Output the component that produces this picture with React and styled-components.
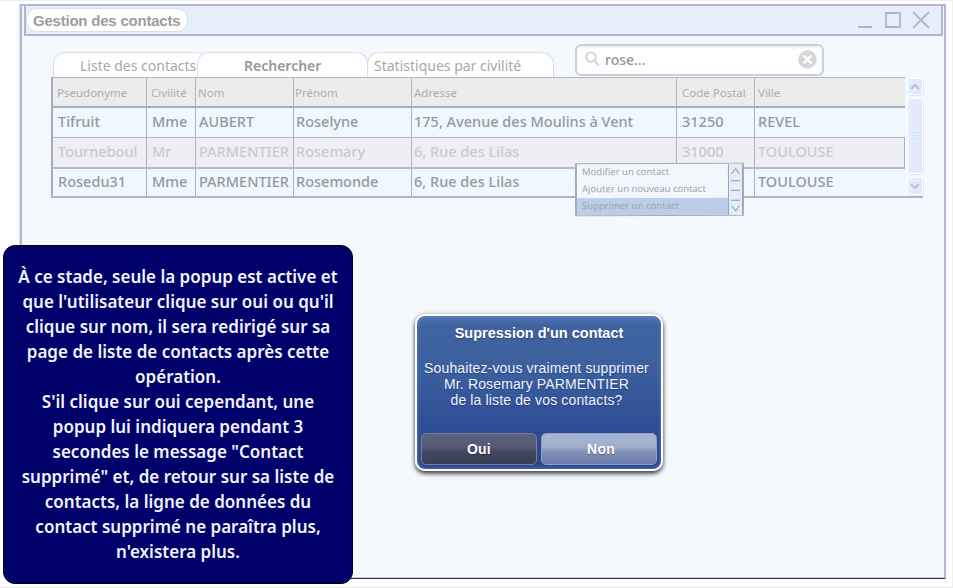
import React from "react";
import styled, { createGlobalStyle } from "styled-components";

const Global = createGlobalStyle`
  * { box-sizing: border-box; }
  body { margin: 0; background: #fff; overflow: hidden; }
`;

const Page = styled.div`
  position: relative;
  width: 953px;
  height: 588px;
  padding: 4px 7px 9px 18px;
  background: #fff;
  border-right: 1px solid #f1f1f1;
  border-bottom: 1px solid #e9e9e9;
  box-shadow: inset 0 1px #eeeef0;
  overflow: hidden;
  font-family: "Noto Sans", sans-serif;
`;

const Window = styled.main`
  width: 926px;
  height: 575px;
  margin-left: 2px;
  padding: 0 1px 0 3px;
  background: #f5f9fe;
  border: 2px solid #b1b5d4;
  border-bottom: 1px solid #283253;
  box-shadow: -1px 0 #dfe1ea, inset 0 -1px #c9cedd;
`;

const TitleBar = styled.header`
  display: flex;
  align-items: center;
  justify-content: space-between;
  height: 30px;
  width: 919px;
  margin-left: -1px;
  padding: 0 10px 0 0;
  background: #e6eff9;
  border: 2px solid #b1b5d4;
  border-top: 0;
`;

const Title = styled.h1`
  margin: 0;
  width: 162px;
  height: 24px;
  padding-left: 6px;
  border: 1px solid #d9dfea;
  border-radius: 11px;
  background: #fff;
  color: #9d9d9d;
  font: bold 15px/23px "Liberation Sans", Arial, sans-serif;
  letter-spacing: -0.22px;
  white-space: nowrap;
`;

const Controls = styled.svg`
  display: block;
  width: 73px;
  height: 18px;
  margin-bottom: 1px;
  fill: none;
  stroke: #b0b4d3;
  stroke-width: 1.8;
`;

const Toolbar = styled.div`
  display: flex;
  height: 41px;
  padding-left: 28px;
  align-items: flex-end;
`;

const Tab = styled.button`
  flex: none;
  width: ${(p) => p.$w}px;
  height: 25px;
  margin: 0 ${(p) => p.$overlap || 0}px 0 0;
  padding: 1px 0 0 ${(p) => p.$pad}px;
  text-align: left;
  border: 1px solid #d8dce4;
  border-bottom: 0;
  border-radius: 12px 12px 0 0;
  background: #fff;
  color: ${(p) => (p.$active ? "#979797" : "#a8a8a8")};
  font: ${(p) => (p.$active ? 600 : 400)} 14px/22px "Noto Sans", sans-serif;
  white-space: nowrap;
`;

const Search = styled.label`
  display: flex;
  align-items: center;
  width: 249px;
  height: 32px;
  margin: 0 0 1px 21px;
  padding: 0 5px 0 8px;
  background: #fff;
  border: 2px solid #cbd0dc;
  border-radius: 6px;
  box-shadow: inset 0 2px 2px #f0f0f3;
  color: #979797;
  font: 500 14px/20px "Noto Sans", sans-serif;
  svg { flex: none; margin-bottom: 2px; }
  span { flex: 1; padding: 0 0 0 5px; }
`;

const TableArea = styled.section`
  display: flex;
  margin-left: 26px;
  width: 872px;
  height: 121px;
  border-bottom: 2px solid #b0b4c3;
`;

const Grid = styled.div`
  width: 854px;
  flex: none;
  border-left: 2px solid #a9adbb;
  border-top: 1px solid #b3b6bd;
`;

const Row = styled.div`
  display: grid;
  grid-template-columns: 94px 49px 98px 118px 265px 78px 150px;
  height: ${(p) => p.$h}px;
  background: ${(p) => (p.$kind === "head" ? "#ececec" : p.$kind === "off" ? "#edeff2" : "#eff8fe")};
  color: ${(p) => (p.$kind === "head" ? "#acacac" : p.$kind === "off" ? "#cacbcd" : "#96999b")};
  font-size: ${(p) => (p.$kind === "head" ? 11.5 : 14.5)}px;
  font-weight: ${(p) => (p.$kind === "head" ? 400 : 500)};
  line-height: ${(p) => p.$lh}px;
  border-bottom: ${(p) => (p.$last ? 0 : p.$kind === "on" ? 1 : 2)}px solid
    ${(p) => (p.$kind === "head" ? "#acb0b5" : "#b1bac9")};
`;

const Cell = styled.div`
  padding-left: ${(p) => p.$pad}px;
  border-right: 1px solid #adb2bc;
  white-space: nowrap;
  &:last-child { border-right-color: ${(p) => (p.$edge ? "#adb2bc" : "transparent")}; }
`;

const Scroll = styled.div`
  display: flex;
  flex-direction: column;
  gap: 3px;
  width: 18px;
  padding: 1px 0 1px 2px;
`;

const ScrollPart = styled.div`
  display: flex;
  align-items: center;
  justify-content: center;
  height: ${(p) => p.$h}px;
  background: linear-gradient(90deg, #e6edfd, #e0e8fb);
  border: 1px solid #fff;
  border-radius: 2px;
  box-shadow: 1px 1px #e3e8f4;
`;

const Menu = styled.div`
  position: absolute;
  left: 575px;
  top: 163px;
  display: flex;
  width: 169px;
  height: 53px;
  border: 1px solid #a8abb3;
  border-left: 2px solid #a8abb3;
  background: #f2f7fd;
  transform: rotate(-0.15deg);
`;

const MenuList = styled.div`
  flex: 1;
`;

const MenuItem = styled.div`
  height: 17px;
  padding-left: 5px;
  font: 9.5px/16px "Noto Sans", sans-serif;
  color: #a2a4a8;
  background: ${(p) => (p.$on ? "#bbcde7" : "transparent")};
`;

const MenuScroll = styled.svg`
  width: 15px;
  height: 51px;
  border-left: 1px solid #9ba3b2;
  border-right: 1px solid #9ba3b2;
  background: #e3ecf8;
  fill: none;
  stroke: #9098a8;
`;

const Dialog = styled.div`
  position: absolute;
  left: 415px;
  top: 314px;
  display: flex;
  flex-direction: column;
  width: 248px;
  height: 157px;
  padding: 0 4px 4px 4px;
  border: 2px solid #fdfdfe;
  border-radius: 10px;
  background: linear-gradient(#5079b8 0, #40639e 9px, #3c609f 35%, #2d4a94 75%, #2b458d);
  box-shadow: 0 3px 4px rgba(0, 0, 0, 0.65), 0 0 4px rgba(0, 0, 0, 0.28), inset 0 0 4px #5c83c2;
  color: #fff;
  text-align: center;
  font-family: "Liberation Sans", Arial, sans-serif;
  text-shadow: 0 1px 1px rgba(20, 40, 90, 0.45);
`;

const DialogTitle = styled.h2`
  margin: 8px 0 18px;
  font-size: 14.5px;
  line-height: 18px;
`;

const DialogText = styled.p`
  margin: 0 5px 0 0;
  font-size: 14px;
  line-height: 16px;
  color: #f0f4fc;
  letter-spacing: 0.14px;
  white-space: pre;
`;

const Actions = styled.div`
  display: flex;
  justify-content: space-between;
  margin-top: auto;
`;

const Action = styled.button`
  width: 116px;
  height: 32px;
  padding: 0 0 0 ${(p) => (p.$light ? 4 : 0)}px;
  border: 1px solid ${(p) => (p.$light ? "#8d9dc4" : "#777f9b")};
  border-radius: 5px;
  background: ${(p) =>
    p.$light
      ? "linear-gradient(#a7b5d2, #a1afcd 42%, #8292b8 60%, #6b7ba9)"
      : "linear-gradient(#5b617b, #555b74 42%, #424760 60%, #393f54)"};
  color: #fff;
  font: bold 14px/28px "Liberation Sans", Arial, sans-serif;
  letter-spacing: 0.2px;
  text-shadow: 0 1px 1px rgba(0, 0, 0, 0.4);
`;

const Note = styled.aside`
  position: absolute;
  left: 3px;
  top: 245px;
  width: 350px;
  height: 339px;
  padding-top: 18px;
  border: 1px solid #000016;
  border-radius: 12px;
  background: #00006a;
  color: #f1f3ff;
  text-align: center;
  font: 600 17px/25px "Noto Sans", sans-serif;
`;

const NoteLine = styled.div`
  white-space: nowrap;
`;

const pads = [5, 5, 3, 2, 2, 5, 3];
const rows = [
  { kind: "head", h: 30, lh: 29, cells: ["Pseudonyme", "Civilité", "Nom", "Prénom", "Adresse", "Code Postal", "Ville"] },
  { kind: "on", h: 30, lh: 27, cells: ["Tifruit", "Mme", "AUBERT", "Roselyne", "175, Avenue des Moulins à Vent", "31250", "REVEL"] },
  { kind: "off", h: 31, lh: 27, cells: ["Tourneboul", "Mr", "PARMENTIER", "Rosemary", "6, Rue des Lilas", "31000", "TOULOUSE"] },
  { kind: "on", h: 27, lh: 25, cells: ["Rosedu31", "Mme", "PARMENTIER", "Rosemonde", "6, Rue des Lilas", "", "TOULOUSE"] },
];

const noteLines = [
  "À ce stade, seule la popup est active et",
  "que l'utilisateur clique sur oui ou qu'il",
  "clique sur nom, il sera redirigé sur sa",
  "page de liste de contacts après cette",
  "opération.",
  "S'il clique sur oui cependant, une",
  "popup lui indiquera pendant 3",
  'secondes le message "Contact',
  'supprimé" et, de retour sur sa liste de',
  "contacts, la ligne de données du",
  "contact supprimé ne paraîtra plus,",
  "n'existera plus.",
];

function Chevron({ up }) {
  return (
    <svg width="10" height="8" fill="none" stroke="#b9c0d8" strokeWidth="2">
      <path d={up ? "M1 6l4-4 4 4" : "M1 2l4 4 4-4"} />
    </svg>
  );
}

export default function App() {
  return (
    <Page>
      <Global />
      <Window>
        <TitleBar>
          <Title>Gestion des contacts</Title>
          <Controls viewBox="0 0 73 18">
            <path d="M0 16h14M28 2h14v14H28zM55 1l16 16M71 1L55 17" />
          </Controls>
        </TitleBar>
        <Toolbar>
          <Tab $w={156} $pad={26} $overlap={-12}>Liste des contacts</Tab>
          <Tab $w={171} $pad={46} $overlap={-1} $active>Rechercher</Tab>
          <Tab $w={187} $pad={6}>Statistiques par civilité</Tab>
          <Search>
            <svg width="15" height="16" fill="none" stroke="#cfcfcf" strokeWidth="1.8">
              <circle cx="6" cy="6" r="4.7" />
              <path d="M9.5 9.8l4.2 4.5" />
            </svg>
            <span>rose...</span>
            <svg width="19" height="19">
              <circle cx="9.5" cy="9.5" r="9.3" fill="#d7d7d7" />
              <path d="M5.5 5.5l8 8M13.5 5.5l-8 8" stroke="#fff" strokeWidth="2.2" />
            </svg>
          </Search>
        </Toolbar>
        <TableArea>
          <Grid>
            {rows.map((r, i) => (
              <Row key={i} $kind={r.kind} $h={r.h} $lh={r.lh} $last={i === 3}>
                {r.cells.map((c, j) => (
                  <Cell key={j} $pad={pads[j] - (r.kind === "head" && j < 4 ? 1 : 0)} $edge={r.kind === "off"}>
                    {c}
                  </Cell>
                ))}
              </Row>
            ))}
          </Grid>
          <Scroll>
            <ScrollPart $h={17}><Chevron up /></ScrollPart>
            <ScrollPart $h={76}>
              <svg width="8" height="8" stroke="#d5dff7"><path d="M0 .5h8M0 3.5h8M0 6.5h8" /></svg>
            </ScrollPart>
            <ScrollPart $h={18}><Chevron /></ScrollPart>
          </Scroll>
        </TableArea>
      </Window>
      <Menu>
        <MenuList>
          <MenuItem>Modifier un contact</MenuItem>
          <MenuItem>Ajouter un nouveau contact</MenuItem>
          <MenuItem $on>Supprimer un contact</MenuItem>
        </MenuList>
        <MenuScroll viewBox="0 0 13 51">
          <path d="M2.5 10l4-5 4 5M2 17h9M2 26.5h9M2 36.5h9M2.5 42l4 5 4-5" />
        </MenuScroll>
      </Menu>
      <Dialog>
        <DialogTitle>Supression d'un contact</DialogTitle>
        <DialogText>
          {"Souhaitez-vous vraiment supprimer\nMr. Rosemary PARMENTIER\nde la liste de vos contacts?"}
        </DialogText>
        <Actions>
          <Action>Oui</Action>
          <Action $light>Non</Action>
        </Actions>
      </Dialog>
      <Note>
        {noteLines.map((t) => (
          <NoteLine key={t}>{t}</NoteLine>
        ))}
      </Note>
    </Page>
  );
}
